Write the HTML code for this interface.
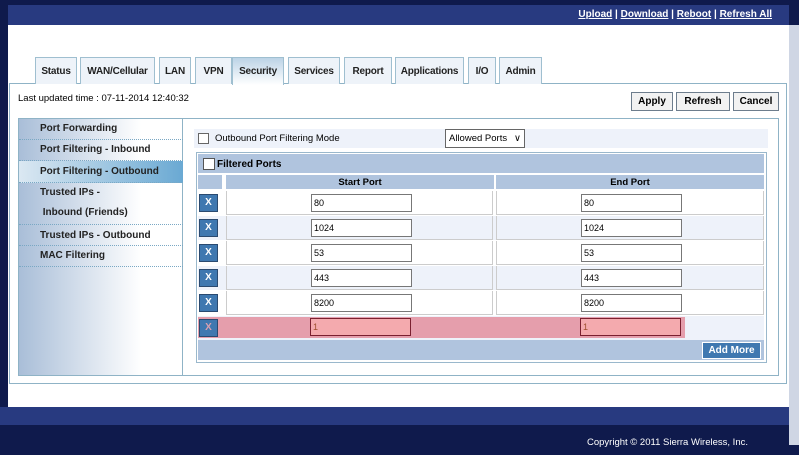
<!DOCTYPE html><html><head><style>
*{margin:0;padding:0;box-sizing:border-box}
body{width:799px;height:455px;background:#0f1a4c;font-family:"Liberation Sans",Arial,sans-serif;position:relative;overflow:hidden;font-size:10px;color:#000}
.a{position:absolute}
.tab{position:absolute;top:57px;height:27px;border:1px solid #9fbfd0;border-bottom:none;background:#eef3f9;font-weight:bold;font-size:10px;text-align:center;line-height:27px;color:#222;letter-spacing:-0.2px}
.btn{position:absolute;top:92px;height:19px;border:1px solid #6d7d8d;background:#f2f2f2;font-weight:bold;font-size:10px;text-align:center;line-height:17px}
.side{position:absolute;left:19px;width:164px;border-bottom:1px dotted #7aa8c4;font-weight:bold;font-size:10px;padding-left:21px;color:#222}
.row{position:absolute;left:198px;width:566px;height:24px}
.x{position:absolute;left:1px;top:3px;width:19px;height:18px;background:#3f78b0;border:1px solid #2a4a70;color:#fff;font-weight:bold;font-size:10px;text-align:center;line-height:16px}
.c1{position:absolute;left:28px;width:267px;height:24px;border:1px solid #ccc;border-top:none}
.c2{position:absolute;left:298px;width:268px;height:24px;border:1px solid #ccc;border-top:none}
.in{position:absolute;top:3px;width:101px;height:18px;border:1px solid #777;background:#fff;font-size:9px;line-height:16px;padding-left:2px}
</style></head><body>
<div class="a" style="left:789px;top:25px;width:10px;height:420px;background:#cfd6e4"></div>
<div class="a" style="left:8px;top:5px;width:781px;height:20px;background:#283a80"></div>
<div class="a" style="left:8px;top:25px;width:781px;height:382px;background:#fff"></div>
<div class="a" style="right:27px;top:9px;color:#fff;font-weight:bold;font-size:10px;white-space:nowrap"><u>Upload</u> | <u>Download</u> | <u>Reboot</u> | <u>Refresh All</u></div>
<div class="a" style="left:9px;top:83px;width:778px;height:301px;border:1px solid #8fb3c6"></div>
<div class="tab" style="left:35px;width:42px">Status</div>
<div class="tab" style="left:80px;width:75px">WAN/Cellular</div>
<div class="tab" style="left:159px;width:32px">LAN</div>
<div class="tab" style="left:195px;width:37px">VPN</div>
<div class="tab" style="left:232px;width:52px;background:linear-gradient(#bcd3e6,#fff);height:28px">Security</div>
<div class="tab" style="left:288px;width:52px">Services</div>
<div class="tab" style="left:344px;width:48px">Report</div>
<div class="tab" style="left:395px;width:69px">Applications</div>
<div class="tab" style="left:468px;width:28px">I/O</div>
<div class="tab" style="left:499px;width:43px">Admin</div>
<div class="a" style="left:18px;top:93px;font-size:9.5px">Last updated time : 07-11-2014 12:40:32</div>
<div class="btn" style="left:631px;width:42px">Apply</div>
<div class="btn" style="left:676px;width:54px">Refresh</div>
<div class="btn" style="left:733px;width:46px">Cancel</div>
<div class="a" style="left:18px;top:118px;width:761px;height:258px;border:1px solid #8fb3c6"></div>
<div class="a" style="left:19px;top:119px;width:164px;height:256px;background:linear-gradient(90deg,#a9bed8,#fff 75%);border-right:1px solid #8fb3c6"></div>
<div class="side" style="top:119px;height:21px;line-height:20px">Port Forwarding</div>
<div class="side" style="top:140px;height:21px;line-height:20px">Port Filtering - Inbound</div>
<div class="side" style="top:161px;height:22px;line-height:21px;background:linear-gradient(90deg,#dbe8f2,#6aa9d3)">Port Filtering - Outbound</div>
<div class="side" style="top:183px;height:42px;line-height:20px">Trusted IPs -<br>&nbsp;Inbound (Friends)</div>
<div class="side" style="top:225px;height:21px;line-height:21px">Trusted IPs - Outbound</div>
<div class="side" style="top:246px;height:21px;line-height:20px">MAC Filtering</div>
<div class="a" style="left:194px;top:129px;width:574px;height:19px;background:#eef2fa"></div>
<div class="a" style="left:198px;top:133px;width:11px;height:11px;border:1px solid #666;background:#fff"></div>
<div class="a" style="left:215px;top:133px;font-size:9.5px">Outbound Port Filtering Mode</div>
<div class="a" style="left:445px;top:129px;width:80px;height:19px;border:1px solid #666;background:#fff;font-size:9.5px;line-height:17px;padding-left:3px">Allowed Ports <span style="position:absolute;right:3px;top:0">&#8744;</span></div>
<div class="a" style="left:196px;top:152px;width:571px;height:211px;border:1px solid #9ab8cc"></div>
<div class="a" style="left:198px;top:154px;width:566px;height:19px;background:#b0c4de"></div>
<div class="a" style="left:203px;top:158px;width:12px;height:12px;border:1px solid #555;background:#fff"></div>
<div class="a" style="left:217px;top:159px;font-weight:bold;font-size:10px">Filtered Ports</div>
<div class="a" style="left:198px;top:175px;width:24px;height:14px;background:#b0c4de"></div>
<div class="a" style="left:226px;top:175px;width:268px;height:14px;background:#b0c4de;font-weight:bold;text-align:center;line-height:15px;font-size:9.5px">Start Port</div>
<div class="a" style="left:496px;top:175px;width:268px;height:14px;background:#b0c4de;font-weight:bold;text-align:center;line-height:15px;font-size:9.5px">End Port</div>

<div class="row" style="top:191px;background:#fff"><div class="x">X</div><div class="c1"><div class="in" style="left:84px">80</div></div><div class="c2"><div class="in" style="left:84px">80</div></div></div>
<div class="row" style="top:216px;background:#eef2fa"><div class="x">X</div><div class="c1"><div class="in" style="left:84px">1024</div></div><div class="c2"><div class="in" style="left:84px">1024</div></div></div>
<div class="row" style="top:241px;background:#fff"><div class="x">X</div><div class="c1"><div class="in" style="left:84px">53</div></div><div class="c2"><div class="in" style="left:84px">53</div></div></div>
<div class="row" style="top:266px;background:#eef2fa"><div class="x">X</div><div class="c1"><div class="in" style="left:84px">443</div></div><div class="c2"><div class="in" style="left:84px">443</div></div></div>
<div class="row" style="top:291px;background:#fff"><div class="x">X</div><div class="c1"><div class="in" style="left:84px">8200</div></div><div class="c2"><div class="in" style="left:84px">8200</div></div></div>
<div class="row" style="top:316px;background:#eef2fa"><div class="a" style="left:0;top:1px;width:487px;height:21px;background:#e59eac"></div><div class="x" style="color:#d9a0b0">X</div><div class="in" style="left:112px;top:2px;background:#f4aaae;border-color:#7a2030;color:#a05030">1</div><div class="in" style="left:382px;top:2px;background:#f4aaae;border-color:#7a2030;color:#a05030">1</div></div>
<div class="a" style="left:198px;top:340px;width:566px;height:20px;background:#b0c4de"></div>
<div class="a" style="left:702px;top:342px;width:59px;height:17px;background:#3f78b0;border:1px solid #fff;color:#fff;font-weight:bold;font-size:10px;text-align:center;line-height:15px">Add More</div>

<div class="a" style="left:0;top:407px;width:789px;height:18px;background:#283a80"></div>
<div class="a" style="left:587px;top:437px;color:#fff;font-size:9.5px">Copyright © 2011 Sierra Wireless, Inc.</div>
</body></html>
